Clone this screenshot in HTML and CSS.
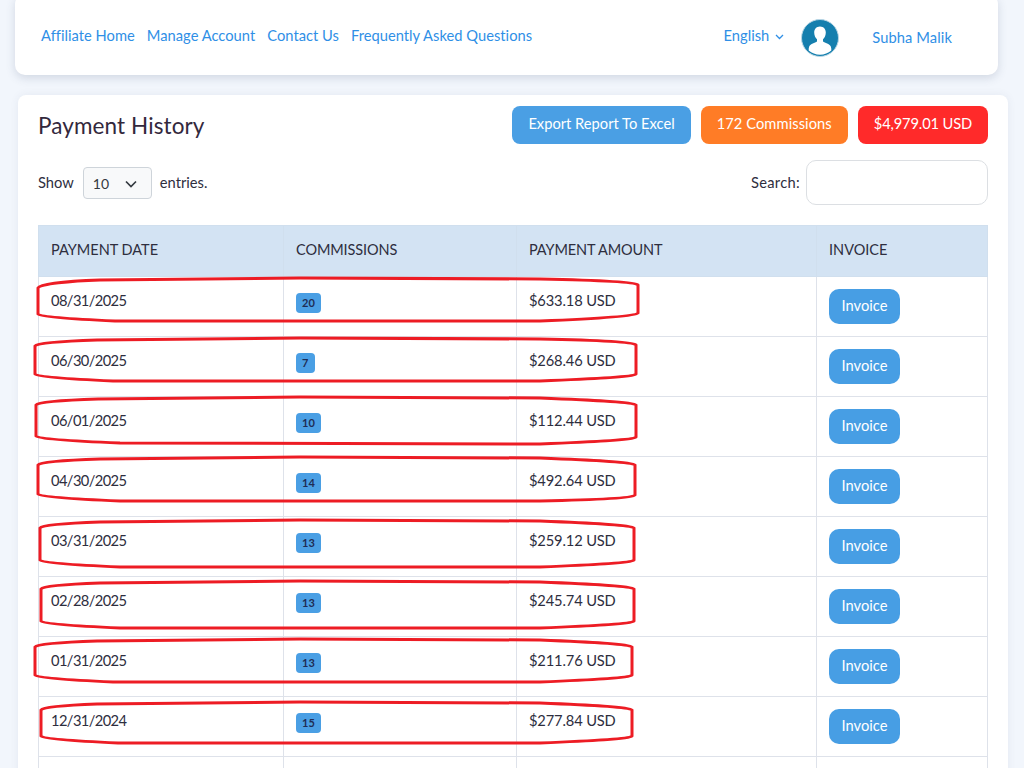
FILE: index.html
```html
<!DOCTYPE html>
<html lang="en">
<head>
<meta charset="utf-8">
<title>Payment History</title>
<link rel="stylesheet" href="styles.css">
</head>
<body>
<div class="page">
<header class="topbar">
  <nav class="nav">
    <a href="#">Affiliate Home</a>
    <a href="#">Manage Account</a>
    <a href="#">Contact Us</a>
    <a href="#">Frequently Asked Questions</a>
  </nav>
  <div class="account">
    <a href="#" class="lang">English
      <svg class="lang-caret" width="9" height="6" viewBox="0 0 9 6"><path d="M1 1l3.5 3.5L8 1" fill="none" stroke="#2f8fe6" stroke-width="1.3"/></svg>
    </a>
    <svg class="avatar" width="38" height="38" viewBox="0 0 38 38">
      <circle cx="19" cy="19" r="18.5" fill="#157fae" stroke="#b9d6e4" stroke-width="1"/>
      <path d="M19 7.500c-3.800 0-5.800 2.800-5.800 6 0 3 1.200 5.300 2.800 6.700v2.300c-2 1.500-6.500 2-7.800 5-.5 1.300-.6 2.700-.5 4 3 2.600 7 4.200 11.300 4.200s8.300-1.600 11.300-4.200c.1-1.300 0-2.700-.5-4-1.300-3-5.800-3.500-7.800-5v-2.300c1.600-1.400 2.800-3.700 2.800-6.700 0-3.200-2-6-5.800-6z" fill="#fff"/>
    </svg>
    <a href="#" class="user">Subha Malik</a>
  </div>
</header>

<main class="card">
  <div class="card-head">
    <h1>Payment History</h1>
    <div class="actions">
      <a href="#" class="pill pill-blue">Export Report To Excel</a>
      <a href="#" class="pill pill-orange">172 Commissions</a>
      <a href="#" class="pill pill-red">$4,979.01 USD</a>
    </div>
  </div>
  <div class="controls">
    <div class="show">Show
      <span class="select">10
        <svg width="12" height="8" viewBox="0 0 12 8"><path d="M1 1.500l5 5 5-5" fill="none" stroke="#343a40" stroke-width="1.700"/></svg>
      </span>
      entries.</div>
    <label class="search">Search: <input type="text" aria-label="Search"></label>
  </div>
  <table class="grid">
    <thead>
      <tr><th class="c1">Payment Date</th><th class="c2">Commissions</th><th class="c3">Payment Amount</th><th class="c4">Invoice</th></tr>
    </thead>
    <tbody>
      <tr><td class="date">08/31/2025</td><td><span class="badge">20</span></td><td class="amount">$633.18 USD</td><td><a href="#" class="inv">Invoice</a></td></tr>
      <tr><td class="date">06/30/2025</td><td><span class="badge">7</span></td><td class="amount">$268.46 USD</td><td><a href="#" class="inv">Invoice</a></td></tr>
      <tr><td class="date">06/01/2025</td><td><span class="badge">10</span></td><td class="amount">$112.44 USD</td><td><a href="#" class="inv">Invoice</a></td></tr>
      <tr><td class="date">04/30/2025</td><td><span class="badge">14</span></td><td class="amount">$492.64 USD</td><td><a href="#" class="inv">Invoice</a></td></tr>
      <tr><td class="date">03/31/2025</td><td><span class="badge">13</span></td><td class="amount">$259.12 USD</td><td><a href="#" class="inv">Invoice</a></td></tr>
      <tr><td class="date">02/28/2025</td><td><span class="badge">13</span></td><td class="amount">$245.74 USD</td><td><a href="#" class="inv">Invoice</a></td></tr>
      <tr><td class="date">01/31/2025</td><td><span class="badge">13</span></td><td class="amount">$211.76 USD</td><td><a href="#" class="inv">Invoice</a></td></tr>
      <tr><td class="date">12/31/2024</td><td><span class="badge">15</span></td><td class="amount">$277.84 USD</td><td><a href="#" class="inv">Invoice</a></td></tr>
      <tr class="empty"><td></td><td></td><td></td><td></td></tr>
    </tbody>
  </table>
</main>

<svg class="marks" width="1024" height="768" viewBox="0 0 1024 768" aria-hidden="true">
  <g fill="none" stroke="#ed1c24" stroke-width="3">
    <path d="M100 280L300 278L540 279C590 280 636 282 638 285V313C636 316 590 319 540 321L115 321C70 319 40 317 38 314V288C40 284 70 281 100 280Z"/>
    <path d="M97 340L300 338L540 339C590 340 634 342 636 345V374C634 377 590 379 540 381L113 381C68 379 37 377 35 374V346C37 343 68 341 97 340Z"/>
    <path d="M98 399L300 397L540 398C590 400 634 402 636 405V437C634 440 590 442 540 444L120 443C70 441 38 439 36 436V405C38 402 68 400 98 399Z"/>
    <path d="M100 459L300 457L540 458C590 460 633 462 635 465V495C633 498 590 500 540 501L120 501C72 499 40 497 38 494V465C40 462 70 460 100 459Z"/>
    <path d="M100 522L300 520L540 521C590 523 632 525 634 528V560C632 563 590 565 540 567L120 567C74 565 42 563 40 560V528C42 525 72 523 100 522Z"/>
    <path d="M100 583L300 581L540 582C590 584 632 586 634 589V621C632 624 590 626 540 628L120 628C74 626 43 624 41 621V589C43 586 72 584 100 583Z"/>
    <path d="M97 641L300 639L540 640C590 642 630 644 632 647V675C630 678 590 680 540 682L113 682C68 680 37 678 35 675V647C37 644 68 642 97 641Z"/>
    <path d="M97 704L300 702L540 703C590 705 630 707 632 710V736C630 739 590 741 540 743L118 743C74 741 43 739 41 736V710C43 707 70 705 97 704Z"/>
  </g>
</svg>
</div>
</body>
</html>
```
FILE: styles.css
```css
html, body { margin: 0; height: 768px; overflow: hidden; }
body {
  background: #f2f6fc;
  font-family: Lato, "Noto Sans", sans-serif;
  font-size: 14.700px;
  color: #2e2e3e;
}
a { text-decoration: none; }
.page { position: relative; height: 768px; overflow: hidden; }

.topbar {
  display: flex;
  justify-content: space-between;
  align-items: flex-start;
  box-sizing: border-box;
  width: 983px;
  height: 81px;
  margin: -6px 0 0 15px;
  padding: 31px 46px 0 26px;
  background: #fff;
  border-radius: 10px;
  box-shadow: 0 3px 10px rgba(60, 80, 110, .18);
}
.nav { display: flex; gap: 12px; letter-spacing: .02px; }
.nav a, .lang, .user { color: #2f8fe6; line-height: 21px; }
.account { display: flex; align-items: flex-start; }
.lang { display: flex; align-items: center; gap: 6px; }
.lang-caret { margin-top: 2px; }
.avatar { margin: -6px 0 0 17px; }
.user { margin: 2px 0 0 33px; letter-spacing: .1px; }

.card {
  box-sizing: border-box;
  width: 990px;
  height: 700px;
  margin: 20px 0 0 18px;
  padding: 11px 20px 0;
  background: #fff;
  border-radius: 8px;
  box-shadow: 0 0 8px rgba(60, 80, 110, .08);
}
.card-head { display: flex; justify-content: space-between; align-items: center; height: 38px; }
h1 { margin: 0; font-size: 22.500px; font-weight: 400; color: #33283c; letter-spacing: .1px; }
.actions { display: flex; gap: 10px; }
.pill {
  display: block;
  box-sizing: border-box;
  height: 38px;
  line-height: 35px;
  padding: 0 16px;
  border-radius: 8px;
  color: #fff;
  white-space: nowrap;
}
.pill-blue { background: #4a9fe4; }
.pill-orange { background: #ff7c26; letter-spacing: .07px; }
.pill-red { background: #ff2a2a; letter-spacing: -.15px; }

.controls { display: flex; justify-content: space-between; align-items: center; height: 45px; margin: 16px 0 20px; }
.show { display: flex; align-items: center; gap: 9px; line-height: 20px; padding-bottom: 1px; }
.select {
  display: flex;
  align-items: center;
  justify-content: space-between;
  box-sizing: border-box;
  width: 69px;
  height: 32px;
  margin: 2px -1px 0 0;
  padding: 2px 14px 0 9px;
  background: #f8f9fa;
  border: 1px solid #ced4da;
  border-radius: 4px;
  font-size: 14px;
  color: #343a40;
}
.search { display: flex; align-items: center; gap: 6px; padding-bottom: 1px; letter-spacing: .3px; }
.search input {
  box-sizing: border-box;
  width: 182px;
  height: 45px;
  background: #fff;
  border: 1px solid #dcdfe3;
  border-radius: 10px;
}

.grid { width: 949px; table-layout: fixed; border-collapse: collapse; }
.grid th, .grid td { border: 1px solid #dee2ea; padding: 0 12px; text-align: left; }
.grid th {
  height: 51px;
  box-sizing: border-box;
  padding-bottom: 3px;
  background: #d3e3f3;
  border-color: #d0dfee;
  font-weight: 400;
  font-size: 14.500px;
  text-transform: uppercase;
}
.c1 { width: 245px; }
.c2 { width: 233px; letter-spacing: -.1px; }
.c3 { width: 300px; letter-spacing: -.14px; }
.c4 { width: 171px; }
.grid td { height: 60px; box-sizing: border-box; vertical-align: top; padding-top: 12px; line-height: 22px; }
.date { letter-spacing: -.6px; }
.amount { letter-spacing: -.15px; }
.badge {
  display: inline-block;
  min-width: 7px;
  height: 20px;
  line-height: 20px;
  margin-top: 4px;
  padding: 0 6px;
  background: #4a9fe4;
  border-radius: 4px;
  font-size: 11px;
  font-weight: 700;
  color: #1f2d55;
  vertical-align: top;
}
.inv {
  display: inline-block;
  height: 35px;
  line-height: 33px;
  padding: 0 12.500px;
  background: #479ee4;
  border-radius: 10px;
  color: #fff;
  vertical-align: top;
}
.marks { position: absolute; left: 0; top: 0; pointer-events: none; }
```
